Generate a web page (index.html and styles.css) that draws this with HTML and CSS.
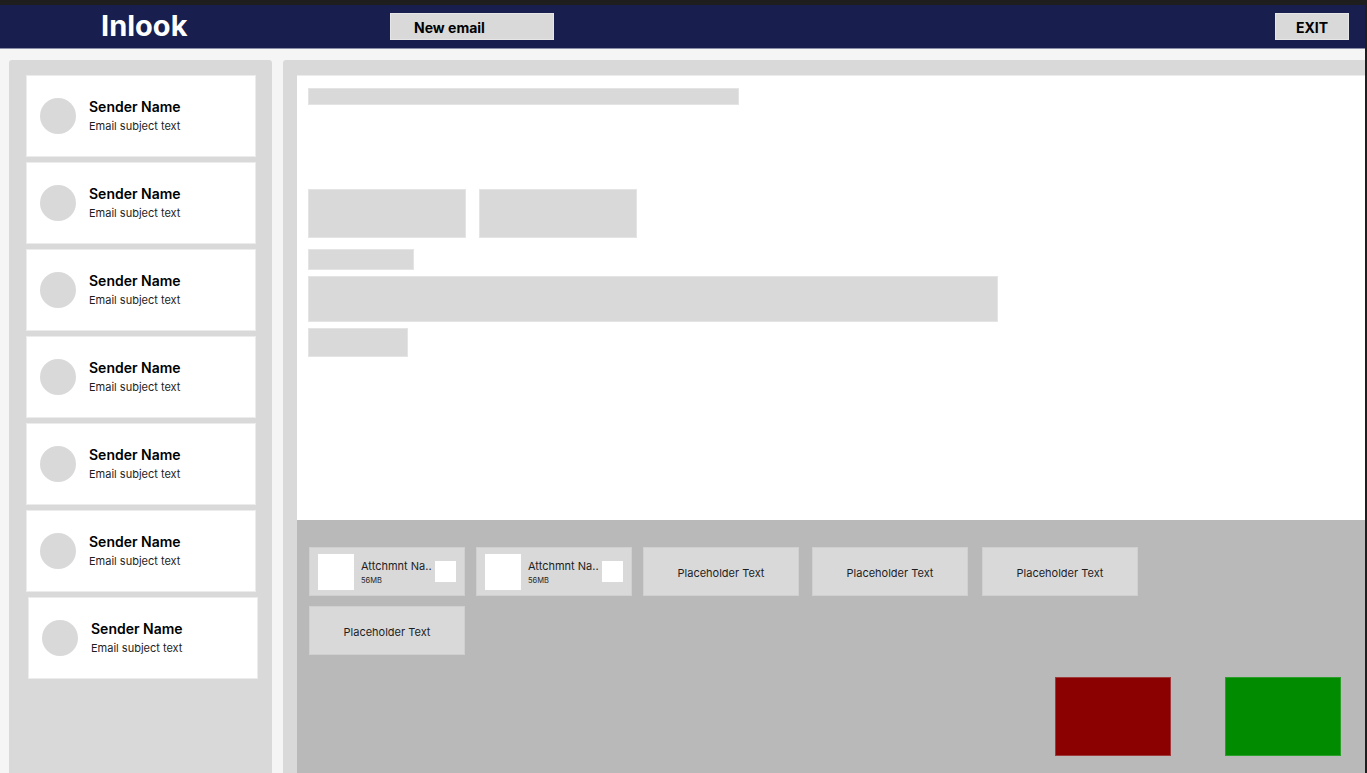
FILE: index.html
```html
<!DOCTYPE html>
<html lang="en">
<head>
<meta charset="utf-8">
<title>Inlook</title>
<link rel="stylesheet" href="styles.css">
</head>
<body>
<div class="app">
  <header class="topbar">
    <div class="logo">Inlook</div>
    <button class="btn-new">New email</button>
    <button class="btn-exit">EXIT</button>
  </header>
  <main class="main">
    <aside class="inbox">
      <div class="card"><div class="avatar"></div><div class="meta"><div class="name">Sender Name</div><div class="subject">Email subject text</div></div></div>
      <div class="card"><div class="avatar"></div><div class="meta"><div class="name">Sender Name</div><div class="subject">Email subject text</div></div></div>
      <div class="card"><div class="avatar"></div><div class="meta"><div class="name">Sender Name</div><div class="subject">Email subject text</div></div></div>
      <div class="card"><div class="avatar"></div><div class="meta"><div class="name">Sender Name</div><div class="subject">Email subject text</div></div></div>
      <div class="card"><div class="avatar"></div><div class="meta"><div class="name">Sender Name</div><div class="subject">Email subject text</div></div></div>
      <div class="card"><div class="avatar"></div><div class="meta"><div class="name">Sender Name</div><div class="subject">Email subject text</div></div></div>
      <div class="card card-shift"><div class="avatar"></div><div class="meta"><div class="name">Sender Name</div><div class="subject">Email subject text</div></div></div>
    </aside>
    <section class="reader">
      <div class="body">
        <div class="ph ph-title"></div>
        <div class="ph-row">
          <div class="ph ph-box"></div>
          <div class="ph ph-box"></div>
        </div>
        <div class="ph ph-small"></div>
        <div class="ph ph-wide"></div>
        <div class="ph ph-tag"></div>
      </div>
      <div class="tray">
        <div class="chips">
          <div class="chip chip-file">
            <div class="thumb"></div>
            <div class="file-info"><div class="file-name">Attchmnt Na..</div><div class="file-size">56MB</div></div>
            <div class="file-x"></div>
          </div>
          <div class="chip chip-file">
            <div class="thumb"></div>
            <div class="file-info"><div class="file-name">Attchmnt Na..</div><div class="file-size">56MB</div></div>
            <div class="file-x"></div>
          </div>
          <div class="chip">Placeholder Text</div>
          <div class="chip chip-gap">Placeholder Text</div>
          <div class="chip chip-gap2">Placeholder Text</div>
          <div class="chip">Placeholder Text</div>
        </div>
        <div class="actions">
          <div class="action action-red"></div>
          <div class="action action-green"></div>
        </div>
      </div>
    </section>
  </main>
</div>
</body>
</html>
```
FILE: styles.css
```css
* { box-sizing: border-box; }
html, body { margin: 0; padding: 0; }
body {
  background: #1e1e1e;
  font-family: Inter, "Noto Sans", "Liberation Sans", sans-serif;
  height: 773px;
  overflow: hidden;
}
.app {
  margin-top: 5px;
  width: 1365px;
  height: 768px;
  background: #f5f5f5;
  display: flex;
  flex-direction: column;
  overflow: hidden;
}
.topbar {
  height: 44px;
  flex: 0 0 44px;
  background: #181f4e;
  border-bottom: 1px solid #8a8ea6;
  display: flex;
  align-items: center;
  padding: 0 16px 1px 101px;
}
.logo {
  color: #ffffff;
  font-weight: 700;
  font-size: 29px;
  width: 289px;
  line-height: 1;
  margin-top: -1px;
}
button {
  font-family: inherit;
  border: 1px solid #e6e6e6;
  background: #d9d9d9;
  color: #000;
  font-weight: 700;
  font-size: 14px;
  height: 27px;
  padding: 2px 0 0 0;
  cursor: pointer;
}
.btn-new {
  width: 164px;
  text-align: left;
  padding-left: 23px;
}
.btn-exit {
  margin-left: auto;
  width: 74px;
  text-align: center;
}
.main {
  flex: 1;
  display: flex;
  gap: 11px;
  padding: 11px 0 0 9px;
  min-height: 0;
}
.inbox {
  width: 263px;
  flex: 0 0 263px;
  background: #d9d9d9;
  border-radius: 3px 3px 0 0;
  padding: 15px 17px;
  display: flex;
  flex-direction: column;
  gap: 5px;
}
.card {
  width: 230px;
  height: 82px;
  flex: 0 0 82px;
  background: #ffffff;
  border: 1px solid #ececec;
  display: flex;
  align-items: center;
  padding-left: 13px;
  gap: 13px;
}
.card-shift { margin-left: 2px; }
.avatar {
  width: 36px;
  height: 36px;
  border-radius: 50%;
  background: #d9d9d9;
  flex: 0 0 36px;
}
.meta { margin-top: -1px; }
.name {
  font-weight: 600;
  font-size: 14px;
  color: #000;
  line-height: 18px;
}
.subject {
  font-size: 11px;
  color: #1e1e1e;
  line-height: 15px;
  margin-top: 3px;
}
.reader {
  flex: 1;
  background: #d9d9d9;
  border-radius: 3px 0 0 0;
  padding: 15px 0 0 14px;
  display: flex;
  flex-direction: column;
  min-width: 0;
}
.body {
  height: 445px;
  flex: 0 0 445px;
  background: #ffffff;
  border-top: 1px solid #ececec;
  padding: 12px 11px;
  display: flex;
  flex-direction: column;
  align-items: flex-start;
}
.ph {
  background: #d9d9d9;
  border: 1px solid #e4e4e4;
}
.ph-title { width: 431px; height: 17px; }
.ph-row { display: flex; gap: 13px; margin-top: 84px; }
.ph-box { width: 158px; height: 49px; }
.ph-small { width: 106px; height: 21px; margin-top: 11px; }
.ph-wide { width: 690px; height: 46px; margin-top: 6px; }
.ph-tag { width: 100px; height: 29px; margin-top: 6px; }
.tray {
  flex: 1;
  background: #b9b9b9;
  padding: 27px 24px 0 12px;
  display: flex;
  flex-direction: column;
}
.chips {
  width: 840px;
  display: flex;
  flex-wrap: wrap;
  column-gap: 11px;
  row-gap: 10px;
}
.chip {
  width: 156px;
  height: 49px;
  background: #d9d9d9;
  border: 1px solid #d0d0d0;
  display: flex;
  align-items: center;
  justify-content: center;
  font-size: 11px;
  color: #1e1e1e;
  padding-top: 2px;
}
.chip-gap { margin-left: 2px; }
.chip-gap2 { margin-left: 3px; }
.chip-file {
  justify-content: flex-start;
  padding-left: 8px;
  padding-top: 0;
}
.thumb {
  width: 36px;
  height: 36px;
  background: #ffffff;
  flex: 0 0 36px;
}
.file-info {
  margin-left: 7px;
  margin-top: 0;
  width: 70px;
}
.file-name {
  font-size: 11px;
  color: #1e1e1e;
  line-height: 14px;
  white-space: nowrap;
}
.file-size {
  font-size: 7.5px;
  color: #1e1e1e;
  margin-top: 3px;
}
.file-x {
  width: 21px;
  height: 21px;
  background: #ffffff;
  margin-left: 4px;
}
.actions {
  display: flex;
  justify-content: flex-end;
  gap: 54px;
  margin-top: 22px;
}
.action {
  width: 116px;
  height: 79px;
}
.action-red { background: #8b0000; border: 1px solid #a03a3a; }
.action-green { background: #008b00; border: 1px solid #2aa02a; }
```
